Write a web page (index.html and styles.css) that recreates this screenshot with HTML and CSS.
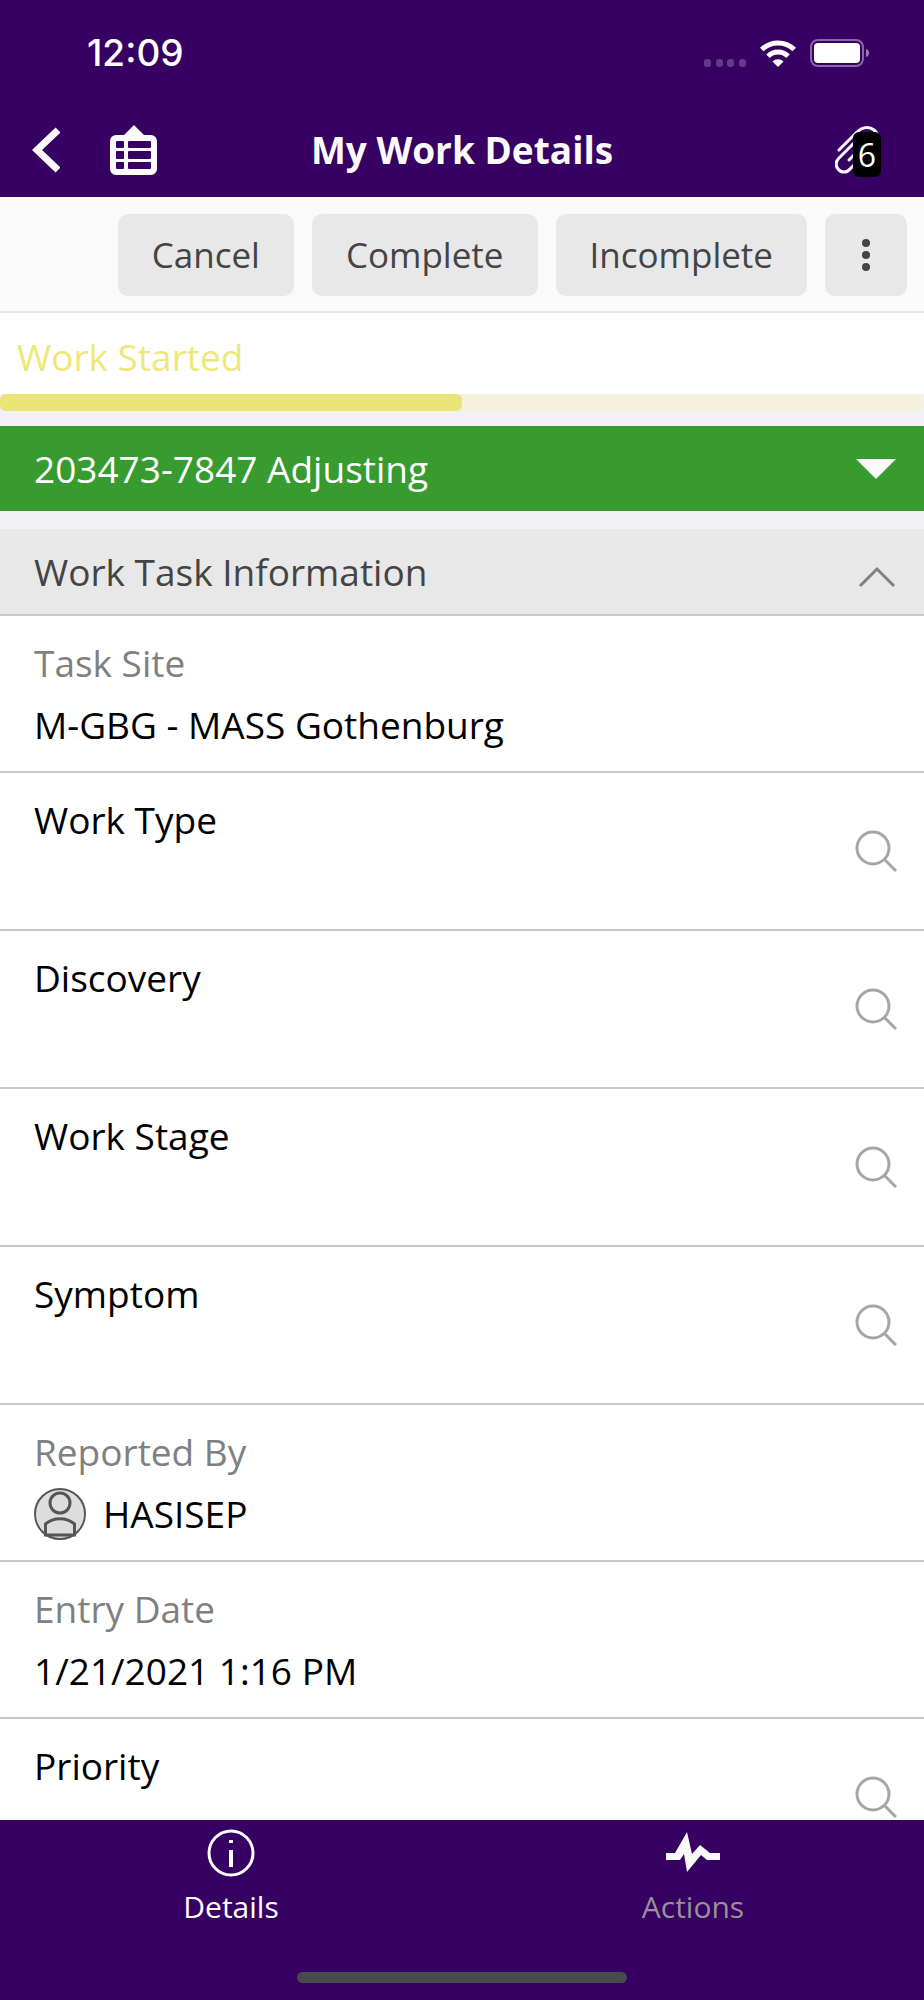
FILE: index.html
```
<!DOCTYPE html>
<html lang="en">
<head>
    <meta charset="UTF-8">
    <meta name="viewport" content="width=device-width, initial-scale=1.0">
    <title>My Work Details</title>
    <link rel="stylesheet" href="styles.css">
</head>
<body>
    <header class="header">
        <div class="status-bar">
            <span class="clock">12:09</span>
            <div class="status-icons">
                <svg width="42" height="8" viewBox="0 0 42 8" fill="#633a8a">
                    <rect x="0" y="0" width="7" height="8" rx="3"/>
                    <rect x="12" y="0" width="7" height="8" rx="3"/>
                    <rect x="23" y="0" width="7" height="8" rx="3"/>
                    <rect x="35" y="0" width="7" height="8" rx="3"/>
                </svg>
                <svg width="36" height="27" viewBox="0 0 36 27" fill="none" stroke="#fff" stroke-width="5">
                    <path d="M1.8 9.6a23 23 0 0 1 32.4 0"/>
                    <path d="M8 16.2a14.2 14.2 0 0 1 20 0"/>
                    <path d="M18 27l-5.5-5.5a8 8 0 0 1 11 0z" fill="#fff" stroke="none"/>
                </svg>
                <svg width="59" height="28" viewBox="0 0 59 28">
                    <rect x="1" y="1" width="52" height="26" rx="7" fill="none" stroke="#8a66a8" stroke-width="2"/>
                    <rect x="4" y="4" width="46" height="20" rx="4" fill="#fff"/>
                    <path d="M56 10c4 1 4 7 0 8z" fill="#9b7cb5"/>
                </svg>
            </div>
        </div>
        <div class="title-bar">
            <div class="title-left">
                <button class="icon-button" aria-label="Back">
                    <svg width="28" height="46" viewBox="0 0 28 46" fill="none" stroke="#fafafa" stroke-width="7">
                        <path d="M26 3L5 23l21 20"/>
                    </svg>
                </button>
                <button class="icon-button" aria-label="Work list">
                    <svg width="48" height="50" viewBox="0 0 48 50">
                        <path d="M24 0l10 10h7a6 6 0 0 1 6 6v28a6 6 0 0 1-6 6H6a6 6 0 0 1-6-6V16a6 6 0 0 1 6-6h8z" fill="#fafafa"/>
                        <g fill="#370063">
                            <rect x="6" y="16" width="8" height="7" rx="1"/>
                            <rect x="18" y="16" width="23" height="7" rx="1"/>
                            <rect x="6" y="26" width="8" height="8" rx="1"/>
                            <rect x="18" y="26" width="23" height="8" rx="1"/>
                            <rect x="6" y="37" width="8" height="7" rx="1"/>
                            <rect x="18" y="37" width="23" height="7" rx="1"/>
                        </g>
                    </svg>
                </button>
            </div>
            <h1>My Work Details</h1>
            <button class="icon-button attachments" aria-label="Attachments">
                <svg width="46" height="48" viewBox="0 0 46 48" fill="none" stroke="#fafafa" stroke-width="3" stroke-linecap="round">
                    <path d="M4 24L22 6c5-5 12-6 17-2s5 11 0 16L15 43c-3 4-9 4-12 0s-2-8 1-11L24 12"/>
                    <path d="M14 34L30 18"/>
                </svg>
                <span class="badge">6</span>
            </button>
        </div>
    </header>

    <div class="toolbar">
        <button class="action">Cancel</button>
        <button class="action">Complete</button>
        <button class="action">Incomplete</button>
        <button class="action more" aria-label="More">
            <svg width="10" height="34" viewBox="0 0 10 34" fill="#444">
                <circle cx="5" cy="5" r="4"/>
                <circle cx="5" cy="17" r="4"/>
                <circle cx="5" cy="29" r="4"/>
            </svg>
        </button>
    </div>

    <main class="content">
        <div class="progress-label">Work Started</div>
        <div class="progress"><div class="progress-value"></div></div>

        <button class="task-select">
            203473-7847 Adjusting
            <svg width="40" height="20" viewBox="0 0 40 20" fill="#fafafa"><path d="M0 0h40L20 20z"/></svg>
        </button>

        <section class="group">
            <button class="group-header">
                Work Task Information
                <svg width="38" height="32" viewBox="0 0 38 32" fill="none" stroke="#808080" stroke-width="3"><path d="M2 30l17-17 17 17"/></svg>
            </button>
            <div class="row readonly">
                <div class="label">Task Site</div>
                <div class="value">M-GBG - MASS Gothenburg</div>
            </div>
            <div class="row lookup">
                <div class="field">
                    <label for="work-type">Work Type</label>
                    <input type="text" id="work-type">
                </div>
                <button class="icon-button" aria-label="Search work type">
                    <svg width="42" height="42" viewBox="0 0 42 42" fill="none" stroke="#a6a6a6" stroke-width="3"><circle cx="18" cy="18" r="16"/><path d="M29.500 29.500L41 41"/></svg>
                </button>
            </div>
            <div class="row lookup">
                <div class="field">
                    <label for="discovery">Discovery</label>
                    <input type="text" id="discovery">
                </div>
                <button class="icon-button" aria-label="Search discovery">
                    <svg width="42" height="42" viewBox="0 0 42 42" fill="none" stroke="#a6a6a6" stroke-width="3"><circle cx="18" cy="18" r="16"/><path d="M29.500 29.500L41 41"/></svg>
                </button>
            </div>
            <div class="row lookup">
                <div class="field">
                    <label for="work-stage">Work Stage</label>
                    <input type="text" id="work-stage">
                </div>
                <button class="icon-button" aria-label="Search work stage">
                    <svg width="42" height="42" viewBox="0 0 42 42" fill="none" stroke="#a6a6a6" stroke-width="3"><circle cx="18" cy="18" r="16"/><path d="M29.500 29.500L41 41"/></svg>
                </button>
            </div>
            <div class="row lookup">
                <div class="field">
                    <label for="symptom">Symptom</label>
                    <input type="text" id="symptom">
                </div>
                <button class="icon-button" aria-label="Search symptom">
                    <svg width="42" height="42" viewBox="0 0 42 42" fill="none" stroke="#a6a6a6" stroke-width="3"><circle cx="18" cy="18" r="16"/><path d="M29.500 29.500L41 41"/></svg>
                </button>
            </div>
            <div class="row readonly">
                <div class="label">Reported By</div>
                <div class="value person">
                    <svg width="52" height="52" viewBox="0 0 52 52" fill="none" stroke="#555">
                        <circle cx="26" cy="26" r="25" fill="#ddd" stroke-width="2"/>
                        <circle cx="26" cy="15" r="10" stroke-width="3"/>
                        <path d="M11.500 47V36c8-7 21-7 29 0v11z" stroke-width="3"/>
                    </svg>
                    HASISEP
                </div>
            </div>
            <div class="row readonly">
                <div class="label">Entry Date</div>
                <div class="value">1/21/2021 1:16 PM</div>
            </div>
            <div class="row lookup">
                <div class="field">
                    <label for="priority">Priority</label>
                    <input type="text" id="priority">
                </div>
                <button class="icon-button" aria-label="Search priority">
                    <svg width="42" height="42" viewBox="0 0 42 42" fill="none" stroke="#a6a6a6" stroke-width="3"><circle cx="18" cy="18" r="16"/><path d="M29.500 29.500L41 41"/></svg>
                </button>
            </div>
        </section>
    </main>

    <footer class="footer">
        <nav class="tabs">
            <a class="tab active" href="#details">
                <svg width="54" height="48" viewBox="0 0 54 48">
                    <circle cx="27" cy="24" r="22" fill="none" stroke="#fff" stroke-width="3"/>
                    <path d="M25 11h4v3h-4zM25 21h4v17h-4z" fill="#fff"/>
                </svg>
                Details
            </a>
            <a class="tab" href="#actions">
                <svg width="54" height="48" viewBox="0 0 54 48" fill="#fafafa">
                    <path d="M0 24h9L21 3l5 22 8-9 10 8h10v7H41l-6-5-14 17-3-18-4 6H0z"/>
                </svg>
                Actions
            </a>
        </nav>
        <div class="home-indicator"></div>
    </footer>
</body>
</html>
```
FILE: styles.css
```
* {
    box-sizing: border-box;
}
body {
    margin: 0;
    height: 100vh;
    display: flex;
    flex-direction: column;
    font-family: "Open Sans", sans-serif;
    font-size: 37px;
    line-height: 62px;
    color: #000;
    background-color: #f1f1f6;
}
button {
    font: inherit;
    border: none;
    cursor: pointer;
}
svg {
    display: block;
    flex-shrink: 0;
}
.icon-button {
    padding: 0;
    background: none;
}

/* header */
.header {
    background-color: #370063;
    color: #fafafa;
}
.status-bar {
    display: flex;
    justify-content: space-between;
    align-items: center;
    height: 105px;
    padding: 0 55px 0 87px;
}
.clock {
    font-family: Inter, sans-serif;
    font-weight: 500;
    color: #fff;
}
.status-icons {
    display: flex;
    align-items: flex-end;
    gap: 14px;
}
.title-bar {
    display: grid;
    grid-template-columns: 1fr auto 1fr;
    align-items: center;
    height: 92px;
    padding: 0 32px 3px;
}
.title-left {
    display: flex;
    align-items: center;
    gap: 50px;
}
h1 {
    margin: 0;
    font-size: 37px;
    font-weight: 700;
}
.attachments {
    position: relative;
    justify-self: end;
    margin-right: 11px;
}
.badge {
    position: absolute;
    right: 0;
    top: 6px;
    width: 28px;
    border-radius: 6px;
    background-color: #000;
    color: #fff;
    font-size: 32px;
    line-height: 45px;
    text-align: center;
}

/* toolbar */
.toolbar {
    display: flex;
    justify-content: flex-end;
    gap: 18px;
    padding: 17px 17px 15px;
    background-color: #fafafa;
    border-bottom: 2px solid #e8e8e8;
}
.action {
    height: 82px;
    padding: 0 34px;
    border-radius: 10px;
    background-color: #e8e8e8;
    color: #444;
    font-size: 35px;
}
.more {
    padding: 0 36px;
}

/* content */
.content {
    flex: 1;
    min-height: 0;
    overflow: hidden;
}
.progress-label {
    padding: 13px 17px 6px;
    background-color: #fff;
    color: #eee87a;
}
.progress {
    height: 17px;
    border-radius: 6px;
    background-color: #f4f2dc;
}
.progress-value {
    width: 50%;
    height: 100%;
    border-radius: 6px;
    background-color: #ebe577;
}
.task-select,
.group-header {
    display: flex;
    justify-content: space-between;
    align-items: center;
    width: 100%;
    height: 85px;
    padding: 0 28px 0 34px;
}
.task-select {
    margin: 15px 0 18px;
    background-color: #379b30;
    color: #fff;
}
.group-header {
    height: 87px;
    background-color: #e8e8e8;
    border-bottom: 2px solid #c7c6cc;
    color: #444;
}
.row {
    padding: 16px 27px 16px 34px;
    border-bottom: 2px solid #c7c6cc;
    background-color: #fff;
}
.readonly {
    padding-bottom: 15px;
}
.label {
    color: #808080;
}
.person {
    display: flex;
    align-items: center;
    gap: 17px;
}
.lookup {
    display: flex;
    align-items: center;
}
.field {
    flex: 1;
}
.field label {
    display: block;
}
.field input {
    display: block;
    width: 100%;
    height: 62px;
    padding: 0;
    border: none;
    outline: none;
    background: none;
    font: inherit;
}

/* footer */
.footer {
    padding: 9px 0 17px;
    background-color: #370063;
}
.tabs {
    display: flex;
}
.tab {
    flex: 1;
    display: flex;
    flex-direction: column;
    align-items: center;
    gap: 9px;
    color: #949494;
    font-size: 30px;
    line-height: 42px;
    text-decoration: none;
}
.tab.active {
    color: #fff;
}
.home-indicator {
    width: 330px;
    height: 11px;
    margin: 44px auto 0;
    border-radius: 6px;
    background-color: #4a4a4a;
}
```
